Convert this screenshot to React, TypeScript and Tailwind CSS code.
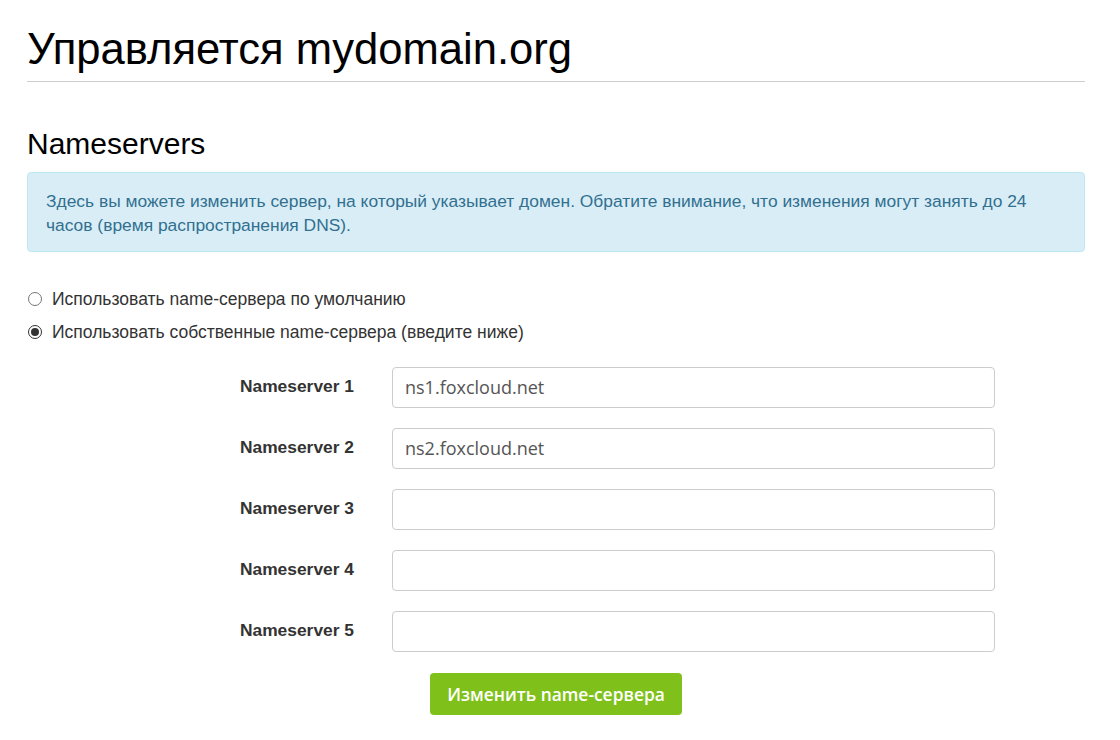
import React from "react";

const arial = { fontFamily: '"Liberation Sans", Arial, sans-serif' };

export default function App() {
  const servers = ["ns1.foxcloud.net", "ns2.foxcloud.net", "", "", ""];
  return (
    <div className="min-h-[740px] bg-white text-[#333]" style={arial}>
      <div className="ml-[27px] w-[1058px] pt-[23px]">
        <h1 className="text-[43.6px] leading-[52px] text-black font-normal pb-[6px] border-b border-[#cccccc]">
          Управляется mydomain.org
        </h1>
        <h2 className="mt-[44px] text-[30px] leading-[36px] text-black font-normal">Nameservers</h2>
        <div className="mt-[10px] rounded-[4px] border border-[#bce8f1] bg-[#d9edf7] pl-[18px] pr-[15px] pt-[16px] pb-[14px] text-[17.4px] leading-[24px] text-[#31708f]">
          Здесь вы можете изменить сервер, на который указывает домен. Обратите внимание, что изменения могут занять до 24 часов (время распространения DNS).
        </div>
        <div className="mt-[37px] flex flex-col gap-[13px]">
          <label className="flex items-center gap-[10px] text-[17.5px] leading-[20px]">
            <span className="ml-[1px] w-[14px] h-[14px] rounded-full border border-[#767676] bg-white" />
            Использовать name-сервера по умолчанию
          </label>
          <label className="flex items-center gap-[10px] text-[17.5px] leading-[20px]">
            <span className="ml-[1px] w-[14px] h-[14px] rounded-full border border-[#333] bg-white flex items-center justify-center">
              <span className="w-[8px] h-[8px] rounded-full bg-[#333]" />
            </span>
            Использовать собственные name-сервера (введите ниже)
          </label>
        </div>
        <div className="mt-[25px] flex flex-col gap-[20px]">
          {servers.map((v, i) => (
            <div key={i} className="flex items-start">
              <div className="w-[327px] text-right font-bold text-[17.4px] leading-[20px] pt-[9px]">
                Nameserver {i + 1}
              </div>
              <div
                className="ml-[38px] w-[603px] h-[41px] rounded-[4px] border border-[#cccccc] px-[12px] flex items-center text-[18px] text-[#555]"
                style={{ fontFamily: '"Open Sans", sans-serif' }}
              >
                {v}
              </div>
            </div>
          ))}
        </div>
        <div className="mt-[21px] flex justify-center">
          <button
            className="h-[42px] px-[17px] rounded-[4px] bg-[#7fc11a] text-white text-[17.4px] font-semibold"
            style={{ fontFamily: '"Open Sans", sans-serif' }}
          >
            Изменить name-сервера
          </button>
        </div>
      </div>
    </div>
  );
}
